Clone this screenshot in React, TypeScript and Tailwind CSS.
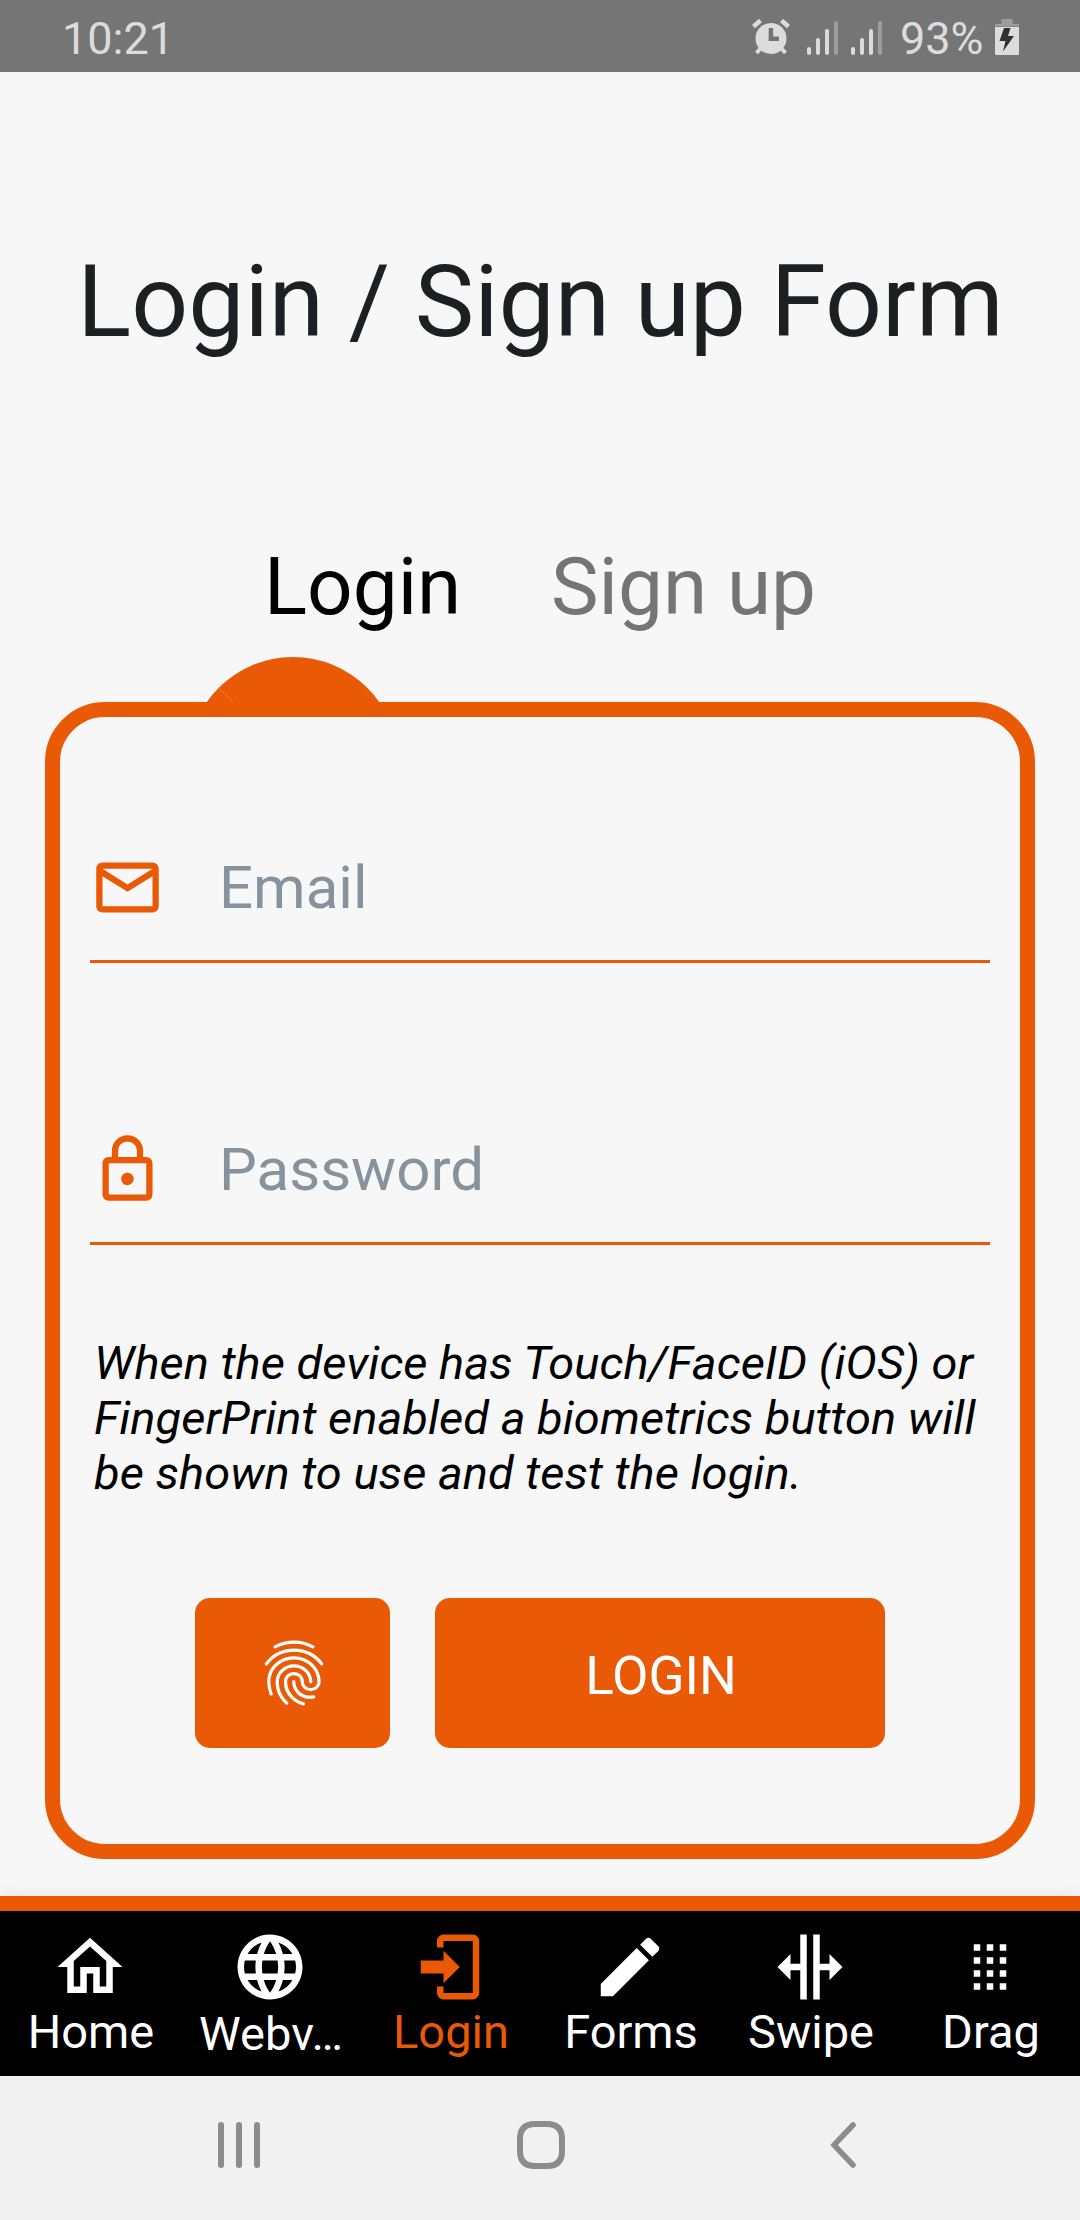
import React from "react";
import { MdFingerprint, MdLanguage } from "react-icons/md";

const paths = {
  email:
    "M4,4H20A2,2 0 0,1 22,6V18A2,2 0 0,1 20,20H4C2.89,20 2,19.1 2,18V6C2,4.89 2.89,4 4,4M12,11L20,6H4L12,11M4,18H20V8.37L12,13.36L4,8.37V18Z",
  lock:
    "M12,17C10.89,17 10,16.1 10,15C10,13.89 10.89,13 12,13A2,2 0 0,1 14,15A2,2 0 0,1 12,17M18,20V10H6V20H18M18,8A2,2 0 0,1 20,10V20A2,2 0 0,1 18,22H6C4.89,22 4,21.1 4,20V10C4,8.89 4.89,8 6,8H7V6A5,5 0 0,1 12,1A5,5 0 0,1 17,6V8H18M12,3A3,3 0 0,0 9,6V8H15V6A3,3 0 0,0 12,3Z",
  home:
    "M12 5.69L17 10.19V18H15V12H9V18H7V10.19L12 5.69M12 3L2 12H5V20H11V14H13V20H19V12H22",
  login:
    "M10,17V14H3V10H10V7L15,12L10,17M10,2H19A2,2 0 0,1 21,4V20A2,2 0 0,1 19,22H10A2,2 0 0,1 8,20V18H10V20H19V4H10V6H8V4A2,2 0 0,1 10,2Z",
  forms:
    "M20.71,7.04C21.1,6.65 21.1,6 20.71,5.63L18.37,3.29C18,2.9 17.35,2.9 16.96,3.29L15.12,5.12L18.87,8.87M3,17.25V21H6.75L17.81,9.93L14.06,6.18L3,17.25Z",
  swipe:
    "M18,16V13H15V22H13V2H15V11H18V8L22,12L18,16M2,12L6,16V13H9V22H11V2H9V11H6V8L2,12Z",
  drag:
    "M7,19V17H9V19H7M11,19V17H13V19H11M15,19V17H17V19H15M7,15V13H9V15H7M11,15V13H13V15H11M15,15V13H17V15H15M7,11V9H9V11H7M11,11V9H13V11H11M15,11V9H17V11H15M7,7V5H9V7H7M11,7V5H13V7H11M15,7V5H17V7H15Z",
};

function Icon({ d, className }: { d: string; className: string }) {
  return (
    <svg viewBox="0 0 24 24" fill="currentColor" className={className}>
      <path d={d} />
    </svg>
  );
}

function Signal({ className }: { className: string }) {
  return (
    <svg viewBox="0 0 31 34" className={"h-[34px] w-[31px] " + className} fill="#dcdcdc">
      <rect x="0" y="26" width="4" height="8" rx="2" />
      <rect x="9" y="17" width="4" height="17" rx="2" />
      <rect x="18" y="8" width="4" height="26" rx="2" />
      <rect x="27" y="0" width="4" height="34" rx="2" fill="#9d9d9d" />
    </svg>
  );
}

function StatusBar() {
  return (
    <header className="flex h-[72px] items-start bg-[#757575] pl-[62px] pr-[61px] text-[45px] leading-[54px] text-[#dcdcdc]">
      <span className="mt-[12px]">10:21</span>
      <svg viewBox="0 0 38 36" className="ml-auto mt-[19px] h-[36px] w-[38px]">
        <g stroke="#dcdcdc" fill="none">
          <path d="M1.5 7.5L8.5 1.5M36.5 7.5L29.500 1.500" strokeWidth="4.500" />
          <path d="M9 29L4.500 34M29 29L33.500 34" strokeWidth="4" />
        </g>
        <circle cx="19" cy="19.500" r="15.500" fill="#dcdcdc" />
        <path d="M18.900 9V19.700H27" fill="none" stroke="#757575" strokeWidth="4.500" />
      </svg>
      <Signal className="ml-[17px] mt-[21px]" />
      <Signal className="ml-[13px] mt-[21px]" />
      <span className="ml-[18px] mt-[12px] w-[82px] whitespace-nowrap">93%</span>
      <svg viewBox="0 0 24 36" className="ml-[13px] mt-[19px] h-[36px] w-[24px]">
        <path d="M6.500 0H17.500V5H24V7.500H0V5H6.500Z" fill="#9d9d9d" />
        <path d="M0 8H24V34.500Q24 36 22.500 36H1.500Q0 36 0 34.500Z" fill="#dcdcdc" />
        <path d="M9 9H15.500L13 17H19L8 32.500L10.500 22H4.500Z" fill="#303030" />
      </svg>
    </header>
  );
}

function Field({ icon, placeholder, type, className }: { icon: string; placeholder: string; type: string; className: string }) {
  return (
    <label className={"flex h-[123px] items-center border-b-[3px] border-[#ea5906] pb-[25px] " + className}>
      <Icon d={icon} className="size-[75px] shrink-0 text-[#ea5906]" />
      <input
        type={type}
        placeholder={placeholder}
        className="ml-[54px] h-[72px] w-full min-w-0 bg-transparent text-[60px] leading-[72px] outline-none placeholder:text-[#86939e] placeholder:opacity-100"
      />
    </label>
  );
}

const tabs = [
  { label: "Home", icon: paths.home, color: "text-white" },
  { label: "Webv…", icon: "", color: "text-white" },
  { label: "Login", icon: paths.login, color: "text-[#ea5906]" },
  { label: "Forms", icon: paths.forms, color: "text-white" },
  { label: "Swipe", icon: paths.swipe, color: "text-white" },
  { label: "Drag", icon: paths.drag, color: "text-white" },
];

function TabBar() {
  return (
    <nav className="grid h-[180px] grid-cols-6 border-t-[15px] border-[#ea5906] bg-black shadow-[0_0_18px_rgba(0,0,0,0.07)]">
      {tabs.map((t) => (
        <a key={t.label} className={"flex flex-col items-center pt-[16.5px] " + t.color}>
          {t.icon ? <Icon d={t.icon} className="size-[78px]" /> : <MdLanguage className="size-[78px]" />}
          <span
            className={
              "whitespace-nowrap pl-[2px] text-[47px] leading-[55px] " + (t.icon ? "-mt-[2px]" : "mt-0")
            }
          >
            {t.label}
          </span>
        </a>
      ))}
    </nav>
  );
}

function SystemNav() {
  return (
    <footer className="flex h-[144px] items-start bg-[#f1f1f1] pl-[218px] pt-[45px]">
      <div className="mt-[1px] flex gap-[12px]">
        <i className="h-[46px] w-[6px] rounded-full bg-[#8c8c8c]" />
        <i className="h-[46px] w-[6px] rounded-full bg-[#8c8c8c]" />
        <i className="h-[46px] w-[6px] rounded-full bg-[#8c8c8c]" />
      </div>
      <svg viewBox="0 0 48 48" className="ml-[257px] size-[48px]">
        <path
          d="M18 3H30C40 3 45 8 45 18V30C45 40 40 45 30 45H18C8 45 3 40 3 30V18C3 8 8 3 18 3Z"
          fill="none"
          stroke="#8c8c8c"
          strokeWidth="6"
        />
      </svg>
      <svg viewBox="0 0 26 48" className="ml-[265px] h-[48px] w-[26px]">
        <path d="M23 4L4 24L23 44" fill="none" stroke="#8c8c8c" strokeWidth="5.500" strokeLinecap="round" />
      </svg>
    </footer>
  );
}

export default function App() {
  return (
    <div className="flex h-[2220px] w-[1080px] flex-col overflow-hidden bg-[#f7f7f7] font-['Roboto',sans-serif]">
      <StatusBar />
      <main className="flex h-[1824px] flex-col px-[45px]">
        <h1 className="mt-[180px] whitespace-nowrap pl-[1px] text-center text-[100px] leading-[100px] text-[#1e1f23]">
          Login / Sign up Form
        </h1>
        <div className="mt-[195px] flex h-[80px] whitespace-nowrap pl-[219px] text-[80px] leading-[80px]">
          <span className="w-[287px] text-black">Login</span>
          <span className="text-[#757575]">Sign up</span>
        </div>
        <div className="ml-[143px] mt-[30px] h-[45px] w-[210px] overflow-hidden">
          <svg viewBox="0 0 210 210" className="size-[210px]">
            <circle cx="105" cy="105" r="105" fill="#ea5906" />
            <path d="M31 31L45 45" stroke="#f08a50" strokeWidth="0.700" />
          </svg>
        </div>
        <section className="h-[1157px] rounded-[60px] border-[15px] border-[#ea5906] px-[30px]">
          <Field icon={paths.email} placeholder="Email" type="email" className="mt-[123px]" />
          <Field icon={paths.lock} placeholder="Password" type="password" className="mt-[159px]" />
          <p className="ml-[4px] mt-[90px] whitespace-nowrap text-[47px] italic leading-[55px] tracking-[0.04px] text-black">
            When the device has Touch/FaceID (iOS) or
            <br />
            FingerPrint enabled a biometrics button will
            <br />
            be shown to use and test the login.
          </p>
          <div className="mt-[98px] flex justify-center gap-[45px] text-white">
            <button className="flex h-[150px] w-[195px] items-center justify-center rounded-[15px] bg-[#ea5906] pl-[3px]">
              <MdFingerprint className="size-[78px]" />
            </button>
            <button className="h-[150px] w-[450px] rounded-[15px] bg-[#ea5906] pl-[2px] pt-[5px] text-[53px] leading-[60px]">
              LOGIN
            </button>
          </div>
        </section>
      </main>
      <TabBar />
      <SystemNav />
    </div>
  );
}
